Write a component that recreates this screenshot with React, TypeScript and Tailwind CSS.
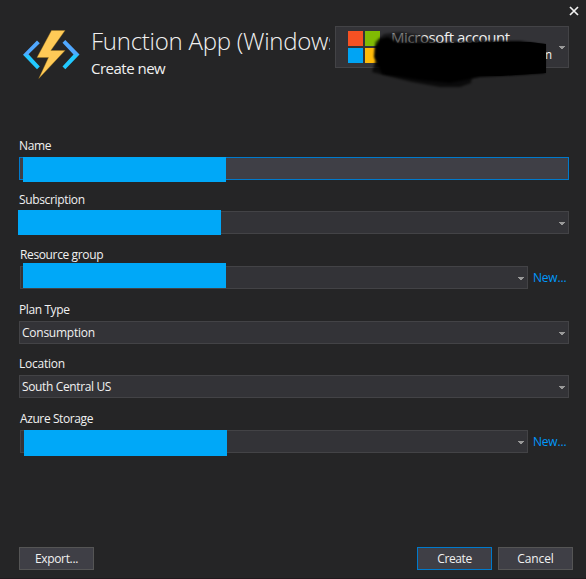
import type { ReactNode } from "react";

function Caret({ className = "" }: { className?: string }) {
  return (
    <svg className={className} width="6" height="3" viewBox="0 0 6 3" shapeRendering="crispEdges">
      <path d="M0 0h6v1H5v1H4v1H2V2H1V1H0z" fill="#999999" />
    </svg>
  );
}

type FieldProps = {
  label: string;
  tracking: string;
  link?: boolean;
  select?: boolean;
  className?: string;
  cover?: string;
  children?: ReactNode;
};

function Field({ label, tracking, link, select = true, className = "", cover, children }: FieldProps) {
  return (
    <div className={`flex flex-col ${link ? "pl-px" : ""} ${className}`}>
      <div className={`h-[19px] text-[12px] leading-[16px] ${tracking}`}>{label}</div>
      <div className="flex h-[23px] items-center">
        <div
          className={`relative flex h-[23px] items-center border pr-[3px] pl-[2px] text-[12px] ${
            link ? "w-[508px]" : "w-[550px]"
          } ${select ? "border-[#434346] bg-[#333337]" : "border-[#007acc] bg-[#3f3f46]"}`}
        >
          {children}
          {select && <Caret className="mt-[2px] ml-auto" />}
          {cover && <div className={`absolute w-[203px] bg-[#00a8f8] ${cover}`} />}
        </div>
        {link && (
          <a className="ml-[5px] text-[12px] leading-[20px] tracking-[-0.2px] text-[#0097fb]">New...</a>
        )}
      </div>
    </div>
  );
}

function Button({ primary, className = "", children }: { primary?: boolean; className?: string; children: ReactNode }) {
  return (
    <button
      className={`block h-[23px] w-[75px] border bg-[#3f3f46] text-center text-[12px] leading-[21px] ${
        primary ? "border-[#007acc]" : "border-[#555555]"
      } ${className}`}
    >
      {children}
    </button>
  );
}

function FunctionIcon() {
  return (
    <svg width="58" height="50" viewBox="0 0 58 50" className="shrink-0">
      <defs>
        <linearGradient id="bracket" x1="0" y1="0" x2="0" y2="1">
          <stop offset="0.46" stopColor="#50a8ff" />
          <stop offset="0.56" stopColor="#22c9ff" />
        </linearGradient>
      </defs>
      <path d="M14 11.500l2.800 2.800L5.500 25.300 16.800 37.500 14 40.300 0 25.800z" fill="url(#bracket)" />
      <path d="M42.300 11L39.500 13.800 50.500 25.500 39.500 37.500l2.800 2.800L56.500 25.500z" fill="url(#bracket)" />
      <path d="M28.500 1.500H42L27.800 21.500H42L15.800 49.500l9.700-21H14z" fill="#ffca57" stroke="#a57a1d" strokeWidth="0.4" />
    </svg>
  );
}

export default function App() {
  return (
    <div className="relative flex h-[579px] w-[586px] flex-col overflow-hidden border-b border-[#211a1e] bg-[#252526] font-['Open_Sans','Noto_Sans',sans-serif] text-[#f1f1f1]">
      <header className="flex h-[138px] pl-[23px]">
        <div className="pt-[29px]">
          <FunctionIcon />
        </div>
        <div className="ml-[10px] w-[239px] overflow-hidden pt-[24px]">
          <h1 className="h-[34px] text-[24px] leading-[34px] font-light tracking-[-0.25px] whitespace-nowrap">Function App (Windows)</h1>
          <p className="text-[15px] leading-[20px] tracking-[-0.5px]">Create new</p>
        </div>
        <div className="relative mt-[26px] ml-[5px] flex h-[42px] w-[234px] border border-[#434346] bg-[#333337]">
          <div className="mt-1 ml-3 grid h-8 w-8 grid-cols-2 gap-[2px]">
            <i className="bg-[#f65123]" />
            <i className="bg-[#80bb03]" />
            <i className="bg-[#00a4f4]" />
            <i className="bg-[#ffba08]" />
          </div>
          <div className="ml-[11px] flex w-[161px] flex-col">
            <span className="h-[20px] text-[15px] leading-[21px] tracking-[-0.4px] whitespace-nowrap">Microsoft account</span>
            <span className="text-right text-[12px] leading-[16px]">m</span>
          </div>
          <Caret className="mt-[19px] ml-[7px]" />
          <svg className="absolute top-[-1px] left-[25px]" width="200" height="70" viewBox="361 26 200 70">
            <defs>
              <filter id="soft" x="-10%" y="-20%" width="120%" height="140%">
                <feGaussianBlur stdDeviation="1" />
              </filter>
            </defs>
            <path d="M375 42L384 34 400 32 418 35 440 43 410 54 376 68z" fill="#000" opacity="0.55" filter="url(#soft)" />
            <path d="M375 62L372 72 392 77 412 82 440 87 460 87 471 83 472 76 440 70z" fill="#000" opacity="0.7" filter="url(#soft)" />
            <path d="M374 57L375 47 380 39 388 37 398 43 440 43 480 41 520 41 545 45V73L520 75 480 77 450 83 420 80 382 74z" fill="#000" filter="url(#soft)" />
            <path d="M388 45L500 42 530 42 546 44V73L500 76 385 74z" fill="#000" />
          </svg>
        </div>
        <svg className="mt-[6px] h-[10px] w-[10px] shrink-0" viewBox="0 0 10 10">
          <path d="M1 1l8 8M9 1l-8 8" stroke="#f1f1f1" strokeWidth="1.700" />
        </svg>
      </header>

      <main className="flex flex-col pl-[19px]">
        <Field label="Name" tracking="tracking-[-0.35px]" select={false} cover="top-[-1px] left-[3px] h-[25px]" />
        <Field label="Subscription" tracking="tracking-[-0.35px]" className="mt-[12px]" cover="top-[-2px] left-[-2px] h-[25px]" />
        <Field label="Resource group" tracking="tracking-[-0.37px]" className="mt-[13px]" link cover="top-[-4px] left-[2px] h-[25px]" />
        <Field label="Plan Type" tracking="tracking-[-0.4px]" className="mt-[13px]">
          <span className="tracking-[-0.25px]">Consumption</span>
        </Field>
        <Field label="Location" tracking="tracking-[-0.25px]" className="mt-[12px]">
          <span className="tracking-[-0.37px]">South Central US</span>
        </Field>
        <Field label="Azure Storage" tracking="tracking-[-0.4px]" className="mt-[13px]" link cover="top-[-1px] left-[3px] h-[26px]" />
      </main>

      <footer className="mt-auto mb-[8px] flex gap-[6px] pr-[13px] pl-[19px]">
        <Button className="mr-auto tracking-[-0.35px]">Export...</Button>
        <Button primary className="tracking-[-0.4px]">Create</Button>
        <Button className="tracking-[-0.1px]">Cancel</Button>
      </footer>
    </div>
  );
}
